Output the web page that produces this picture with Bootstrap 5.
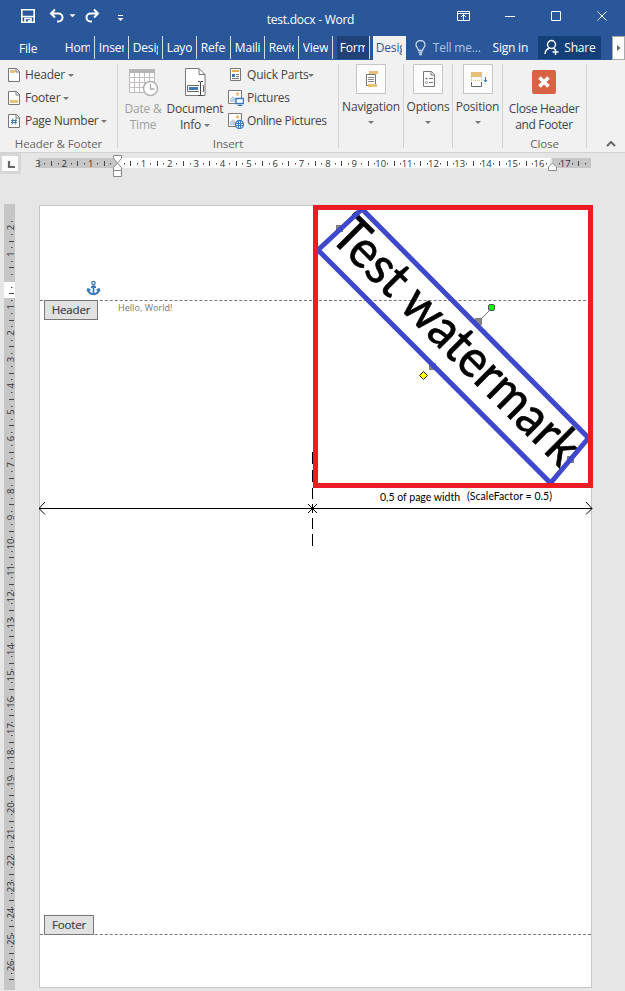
<!DOCTYPE html>
<html lang="en">
<head>
<meta charset="utf-8">
<meta name="viewport" content="width=device-width, initial-scale=1">
<title>test.docx - Word</title>
<link href="https://cdn.jsdelivr.net/npm/bootstrap@5.3.0/dist/css/bootstrap.min.css" rel="stylesheet">
<style>
body{width:625px;height:991px;overflow:hidden;background:#e6e6e6;font:12px/16px "Open Sans","Noto Sans",sans-serif;letter-spacing:-.2px;color:#444}
svg{display:block;flex:none}
.titlebar{height:36px;background:#2a579a;color:#fff}
.quick{width:97px;margin-left:20px;padding-top:8px}
.doc-title{width:387px;padding-top:12px;text-align:center;letter-spacing:-.25px}
.win{padding-top:8px;margin-left:-55px}
.tabs{height:24px;background:#2a579a;color:#fff}
.file-tab{width:61px;padding:5px 0 0 19px}
.rtab{width:34px;border-right:1px solid #d5dde9;padding:4px 4px 0 4px;height:23px}
.rtab span{display:block;overflow:hidden;white-space:nowrap}
.rtab.ctx{width:33px;margin-left:4px;background:#204277;padding-left:3px}
.rtab.on{width:33px;margin-left:3px;background:#f1f1f1;color:#2a579a;border:0;height:24px;padding-left:3px}
.tell{margin-left:9px;width:78px;color:#adc2e0;padding-top:4px;white-space:nowrap}
.sign{width:46px;padding-top:4px;white-space:nowrap}
.share{width:63px;height:23px;background:#143f78;padding:0 0 0 6px;gap:4px}
.scroller{width:13px;height:24px;margin-left:11px;background:#fff;border:1px solid #ababab}
.ribbon{height:93px;background:#f1f1f1;border-bottom:1px solid #d2d2d2;padding-top:4px}
.grp{height:84px;border-right:1px solid #d2d2d2;white-space:nowrap}
.grp-name{height:16px;line-height:16px;color:#666;text-align:center;font-size:11.5px;letter-spacing:-.1px}
.stack{height:72px;margin-top:-1px;padding-bottom:1px;margin-bottom:1px}
.cmd{height:23px;gap:5px}
.caret{display:inline-block;border:3px solid transparent;border-top-color:#777;border-bottom:0;vertical-align:2px;margin-left:3px}
.big{text-align:center}
.tile{width:30px;height:30px;border:1px solid #c6c6c6;background:#fcfcfc}
.hrow{height:51px}
.corner{width:21px;height:21px;background:#d6d6d6;padding:3px 3px 3px 2px}
.corner-in{width:16px;height:15px;background:#fcfcfc}
.vrule{width:39px}
.sheet{width:553px;height:783px;background:#fff;border:1px solid #c6c6c6}
.hf-tag{height:20px;border:1px solid #777;background:#e1e1e1;margin-left:4px;text-align:center;line-height:18px;letter-spacing:-.15px;font-size:11.5px;font-weight:500;-webkit-text-stroke:.2px #444}
.head-space{height:95px;border-bottom:1px dashed #777}
.foot-line{border-top:1px dashed #777;margin-top:-1px}
.hello{margin-left:20px;padding-top:1px;font-size:9px;line-height:14px;color:#777;letter-spacing:.05px}
.body-space{height:595px}
.notes{left:-1px;top:-1px}
</style>
</head>
<body>
<header>
 <div class="titlebar d-flex">
  <div class="quick">
   <svg width="110" height="18" viewBox="20 8 110 18" fill="none" stroke="#fff">
    <path d="M21.8 9.8h12.4v12.4H21.8z" stroke-width="1.6"/><path d="M22 16.5h12M25 22v-3.5h6V22" stroke-width="1.6"/><path d="M28 20h2v2h-2z" fill="#fff" stroke="none"/>
    <path d="M51 13.5h7.5a4 4 0 0 1 0 8H57M55 9.5l-4 4 4 4" stroke-width="2"/>
    <path d="M69.5 14.3h6l-3 3z" fill="#fff" stroke="none"/>
    <path d="M98 13.5h-7.500a4 4 0 0 0 0 8H92M94 9.500l4 4-4 4" stroke-width="2"/>
    <path d="M118 15.500h5" /><path d="M117.500 18h6l-3 3z" fill="#fff" stroke="none"/>
   </svg>
  </div>
  <div class="doc-title">test.docx - Word</div>
  <div class="win">
   <svg width="176" height="18" viewBox="449 8 176 18" fill="none" stroke="#fff"><path d="M457.500 11.500h12v9h-12zM457.500 13.500h12M463.500 20v-5M461 17l2.500-2.500L466 17M505 16.500h10M551.500 11.500h9v9h-9zM597.500 11.500l9 9M606.500 11.500l-9 9"/></svg>
  </div>
 </div>
 <nav class="tabs d-flex">
  <div class="file-tab">File</div>
  <div class="rtab"><span>Home</span></div><div class="rtab"><span>Inser</span></div><div class="rtab"><span>Desig</span></div><div class="rtab"><span>Layo</span></div><div class="rtab"><span>Refer</span></div><div class="rtab"><span>Maili</span></div><div class="rtab"><span>Revie</span></div><div class="rtab"><span>View</span></div>
  <div class="rtab ctx"><span>Form</span></div><div class="rtab on"><span>Desig</span></div>
  <div class="tell d-flex"><svg width="18" height="17" viewBox="0 0 18 17" fill="none" stroke="#c9d7ec" stroke-width="1.3"><path d="M3.500 10.500C3.500 8.500 1 7.500 1 4.800a4.500 4.300 0 0 1 9 0c0 2.700-2.500 3.700-2.500 5.700zM3.500 12.500h4M4 14.500h3"/></svg><span>Tell me...</span></div>
  <div class="sign">Sign in</div>
  <div class="share d-flex align-items-center"><svg width="16" height="17" viewBox="0 0 16 17" fill="none" stroke="#fff" stroke-width="1.400"><circle cx="7.500" cy="5.500" r="4"/><path d="M1 15c.2-3.500 2-5 4.500-6M9.500 9l1.500 1.500M11.500 10v6M8.500 13h6"/></svg><span>Share</span></div>
  <div class="scroller d-flex align-items-center justify-content-center"><svg width="4" height="6"><path d="M0 0l3.500 3L0 6z" fill="#666"/></svg></div>
 </nav>
</header>
<section class="ribbon d-flex">
 <div class="grp" style="width:118px">
  <div class="stack" style="padding-left:8px">
   <div class="cmd d-flex align-items-center"><svg width="12" height="14"><path d="M.5.500h8l3 3v10H.5z" fill="#fff" stroke="#777"/><path d="M8 .5v3.500h3.500" fill="none" stroke="#777"/><path d="M2 2h5v3H2z" fill="#e8bf78"/></svg><span>Header<i class="caret"></i></span></div>
   <div class="cmd d-flex align-items-center"><svg width="12" height="14"><path d="M.5.500h8l3 3v10H.5z" fill="#fff" stroke="#777"/><path d="M8 .5v3.500h3.500" fill="none" stroke="#777"/><path d="M2 9h8v3H2z" fill="#e8bf78"/></svg><span>Footer<i class="caret"></i></span></div>
   <div class="cmd d-flex align-items-center"><svg width="12" height="14"><path d="M.5.500h8l3 3v10H.5z" fill="#fff" stroke="#777"/><path d="M8 .5v3.500h3.500" fill="none" stroke="#777"/><path d="M5 4.500l-1 6M8 4.500l-1 6M3 6.500h6M3 8.500h6" stroke="#3e78b8"/></svg><span style="letter-spacing:-.3px">Page Number<i class="caret"></i></span></div>
  </div>
  <div class="grp-name">Header &amp; Footer</div>
 </div>
 <div class="grp" style="width:221px">
  <div class="d-flex" style="height:72px">
   <div class="big" style="width:50px;color:#a0a0a0;padding-top:4px">
    <svg class="mx-auto" width="32" height="29" viewBox="0 0 32 29"><path d="M2.500 1.500h25v23h-25z" fill="#fff" stroke="#bbb"/><path d="M2 1h26v4H2z" fill="#b5b5b5"/><path d="M2 9.500h26M2 14.500h26M2 19.500h26M7.500 5v20M12.500 5v20M17.500 5v20M22.500 5v20" stroke="#c3bcc3"/><circle cx="23.500" cy="20.500" r="7" fill="#fff" stroke="#b5b0b5" stroke-width="1.500"/><path d="M23.500 16v5h4" fill="none" stroke="#aaa" stroke-width="1.300"/></svg>
    <div style="margin-top:4px">Date &amp;<br>Time</div>
   </div>
   <div class="big" style="width:54px;padding-top:4px">
    <svg class="mx-auto" width="24" height="29" viewBox="0 0 24 29"><path d="M2.500.5H16l6 6v21H2.500z" fill="#fff" stroke="#777"/><path d="M16 .5v6h6" fill="none" stroke="#777"/><path d="M4.500 17.500h16v6h-16z" fill="#fff" stroke="#666"/><path d="M6 19h9v3H6z" fill="#3e78b8"/><path d="M16 14h3.500v13H16z" fill="#fff"/><path d="M17.500 14v13M15 13.500h2l.5.500.5-.5h2M15 27.500h2l.5-.5.5.500h2" fill="none" stroke="#444"/></svg>
    <div style="margin:4px -3px 0">Document<br>Info<i class="caret"></i></div>
   </div>
   <div class="stack" style="padding-left:6px">
    <div class="cmd d-flex align-items-center" style="gap:3px"><svg width="16" height="16" viewBox="0 0 16 16"><path d="M2.500 1.500h10v12h-10z" fill="#fff" stroke="#777"/><path d="M4 3h7v2H4z" fill="#e8a84e"/><path d="M4 7h3v3H4z" fill="#3e78b8"/><path d="M8 7.500h3M8 9.500h3M4 11.500h7" stroke="#777"/></svg><span>Quick Parts<i class="caret ms-0"></i></span></div>
    <div class="cmd d-flex align-items-center" style="gap:3px"><svg width="16" height="16" viewBox="0 0 16 16"><path d="M.5.500h13v13H.5z" fill="#fff" stroke="#777"/><circle cx="9.500" cy="4" r="1.700" fill="#eabb77"/><path d="M2 12V9l3-3 3 3v3z" fill="#bdd0e6"/><path d="M8 8.500h7.500v5H8z" fill="#fff" stroke="#3e78b8" stroke-width="1.400"/><path d="M12 14v1.500M9.500 15.500h5" stroke="#3e78b8"/></svg><span style="letter-spacing:-.3px">Pictures</span></div>
    <div class="cmd d-flex align-items-center" style="gap:3px"><svg width="16" height="16" viewBox="0 0 16 16"><path d="M.5.500h13v13H.5z" fill="#fff" stroke="#777"/><circle cx="9.500" cy="4" r="1.700" fill="#eabb77"/><path d="M2 12V9l3-3 3 3v3z" fill="#bdd0e6"/><circle cx="11.500" cy="11.500" r="4" fill="#fff" stroke="#3e78b8" stroke-width="1.300"/><path d="M7.500 10.500h8M7.500 12.500h8M10.500 8v7M12.500 8v7" stroke="#3e78b8"/></svg><span style="letter-spacing:-.35px">Online Pictures</span></div>
   </div>
  </div>
  <div class="grp-name">Insert</div>
 </div>
 <div class="grp big" style="width:65px"><div class="tile mx-auto"><svg width="28" height="28"><path d="M12 6h9v3h-9z" fill="#e8bf78"/><path d="M9.500 9.500h9v11h-9z" fill="#fff" stroke="#777"/><path d="M11 12.500h6M11 14.500h6M11 16.500h6" stroke="#888"/><path d="M11 19h9v3h-9z" fill="#e8bf78"/></svg></div><div style="margin-top:5px">Navigation<br><i class="caret ms-0" style="vertical-align:3px"></i></div></div>
 <div class="grp big" style="width:49px"><div class="tile mx-auto"><svg width="28" height="28"><path d="M9.500 6.500h8l3 3v12h-11z" fill="#fff" stroke="#777"/><path d="M17 6.500v3.500h3.500" fill="none" stroke="#777"/><path d="M15 13.500h4M15 17.500h4" stroke="#777"/><circle cx="12.500" cy="13.500" r="1" fill="#777"/><circle cx="12.500" cy="17.500" r="1" fill="none" stroke="#777" stroke-width=".7"/></svg></div><div style="margin-top:5px">Options<br><i class="caret ms-0" style="vertical-align:3px"></i></div></div>
 <div class="grp big" style="width:50px"><div class="tile mx-auto"><svg width="28" height="28"><path d="M7 7h11v5H7z" fill="#e8bf78"/><path d="M7 15.500h11M7.500 12v4M17.500 12v4" stroke="#e8bf78" stroke-dasharray="1 1"/><path d="M7.500 17v4.500h10V17" fill="none" stroke="#666"/><path d="M21.500 12v5M20 15l1.500 2 1.500-2" fill="none" stroke="#3e78b8"/></svg></div><div style="margin-top:5px">Position<br><i class="caret ms-0" style="vertical-align:3px"></i></div></div>
 <div class="grp big" style="width:84px"><div style="height:72px;padding:6px 1px 0 0"><svg class="mx-auto" width="24" height="24"><rect width="24" height="24" rx="2" fill="#d86344"/><path d="M7.500 7.500l9 9M16.500 7.500l-9 9" stroke="#fff" stroke-width="3.600"/></svg><div style="margin-top:7px;letter-spacing:-.35px">Close Header<br>and Footer</div></div><div class="grp-name">Close</div></div>
 <div class="flex-fill d-flex align-items-end justify-content-center" style="padding:0 0 5px 9px"><svg width="10" height="6"><path d="M1 5l4-4 4 4" fill="none" stroke="#666" stroke-width="2"/></svg></div>
</section>
<main>
 <div class="hrow d-flex">
  <div class="corner"><div class="corner-in"><svg width="16" height="15"><path d="M7 5v6h6" fill="none" stroke="#666" stroke-width="2.200"/></svg></div></div>
  <svg id="hr" width="604" height="51" viewBox="21 153 604 51"></svg>
 </div>
 <div class="d-flex">
  <svg class="vrule" id="vr" width="39" height="787" viewBox="0 204 39 787"></svg>
  <div class="sheet position-relative" style="margin-top:1px">
   <div class="head-space"></div>
   <div class="d-flex" style="margin-top:-1px;height:20px"><div class="hf-tag" style="width:54px">Header</div><div class="hello">Hello, World!</div></div>
   <div class="body-space"></div>
   <div class="hf-tag" style="width:50px">Footer</div>
   <div class="foot-line"></div>
   <svg class="notes position-absolute" width="554" height="783" viewBox="39 205 554 783">
    <g stroke="#3e78b8" fill="none" stroke-width="1.800"><circle cx="93.500" cy="283" r="1.700" stroke-width="1.300"/><path d="M93.500 285v9M91 287h5M88 289.500c.5 3 2.500 4.500 5.500 4.800 3-.3 5-1.800 5.500-4.800M87.300 291.500l.8-2.500 2.200 1.300M99.700 291.500l-.8-2.500-2.200 1.300"/></g>
    <g fill="#888" stroke="#777"><path d="M336.500 225.500h6v6h-6zM475.500 318.500h6v6h-6zM429.500 363.500h6v6h-6zM567.500 456.500h6v6h-6z"/></g>
    <path d="M480 320l11-11" stroke="#777"/>
    <text transform="translate(328.300 237.800) rotate(44.900)" font-family="Lato" font-size="52.500" textLength="327" lengthAdjust="spacingAndGlyphs" fill="#000" stroke="#000" stroke-width=".7" letter-spacing="0">Test watermark</text>
    <path d="M362 209L318 250 550.500 483 588.500 438z" fill="none" stroke="#3f48cc" stroke-width="5"/>
    <path d="M312.500 452v12M312.500 470v12M312.500 488v11M312.500 504v9M312.500 518v11M312.500 534v12" stroke="#000"/>
    <rect x="315.500" y="207.500" width="275" height="278" fill="none" stroke="#ed1c24" stroke-width="5"/>
    <rect x="488.500" y="304.500" width="6" height="6" rx="1.500" fill="#0f0" stroke="#555"/>
    <path d="M423.500 371.500l4 4-4 4-4-4z" fill="#ff0" stroke="#222"/>
    <path d="M39 508.500h553M45 502l-6 6.500 6 6M586 502l6 6.500-6 6M308 504l9 9M317 504l-9 9" fill="none" stroke="#000"/>
    <g font-family="Lato" font-size="10.500" fill="#000" letter-spacing="0"><text x="380" y="501" textLength="80">0,5 of page width</text><text x="467" y="500" textLength="85">(ScaleFactor = 0.5)</text></g>
   </svg>
  </div>
 </div>
</main>
<script>
// Draw the centimetre rulers: numbers at whole units, bars at halves, dots at quarters.
const U = 26.37;
let h = '<path d="M38 158h79v10H38zM552 158h39v10h-39z" fill="#c6c6c6"/><path d="M117 158h433v10H117z" fill="#fff"/>';
const txt = 'font-family="Open Sans" font-size="9.5" fill="#333" text-anchor="middle" letter-spacing="0"';
for (let q = -12; q <= 71; q++) {
  const x = 117 + q * U / 4;
  if (q === 0 || q === 66) continue;
  if (q % 4 === 0) h += `<text x="${x}" y="166.800" ${txt}>${Math.abs(q / 4)}</text>`;
  else if (q % 2 === 0) h += `<rect x="${Math.round(x)}" y="161" width="1" height="5" fill="#444"/>`;
  else h += `<rect x="${Math.round(x)}" y="163" width="1" height="1.500" fill="#444"/>`;
}
h += '<path d="M113.500 155.500h8v3l-4 4.500-4-4.500zM117.500 163l4 4.500v3h-8v-3zM113.500 170.500h8v6h-8zM548.500 170.500v-3.500l4-4 4 4v3.500z" fill="#fff" stroke="#888"/>';
document.getElementById('hr').innerHTML = h;
const V = 26.37;
let v = '<path d="M4 204h11v786H4z" fill="#c6c6c6"/><path d="M4 282h11v16H4z" fill="#fff"/>';
for (let q = -9; q <= 106; q++) {
  const y = 280.3 + q * V / 4;
  if (q === 0) continue;
  if (q % 4 === 0) v += `<text transform="translate(14 ${y}) rotate(-90)" ${txt}>${Math.abs(q / 4)}</text>`;
  else if (q % 2 === 0) v += `<rect x="9" y="${Math.round(y)}" width="5" height="1" fill="#444"/>`;
  else v += `<rect x="11" y="${Math.round(y)}" width="1.500" height="1" fill="#444"/>`;
}
document.getElementById('vr').innerHTML = v;
</script>
<script src="https://cdn.jsdelivr.net/npm/bootstrap@5.3.0/dist/js/bootstrap.bundle.min.js"></script>
</body>
</html>
